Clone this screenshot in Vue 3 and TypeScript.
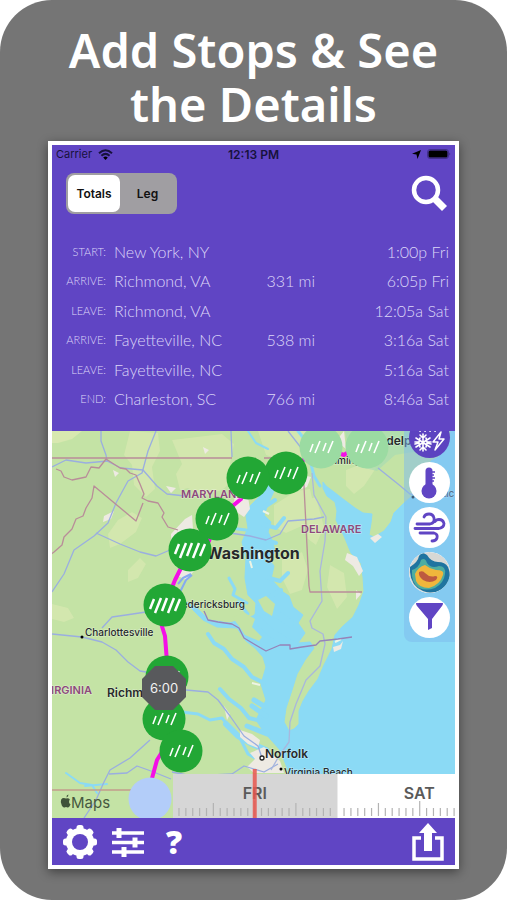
<script setup lang="ts">
import { ref } from 'vue'

interface Stop {
  label: string
  place: string
  miles: string
  time: string
}

interface Marker {
  x: number
  y: number
  heavy?: boolean
  faded?: boolean
}

const mode = ref<'totals' | 'leg'>('totals')

const stops: Stop[] = [
  { label: 'START:', place: 'New York, NY', miles: '', time: '1:00p Fri' },
  { label: 'ARRIVE:', place: 'Richmond, VA', miles: '331 mi', time: '6:05p Fri' },
  { label: 'LEAVE:', place: 'Richmond, VA', miles: '', time: '12:05a Sat' },
  { label: 'ARRIVE:', place: 'Fayetteville, NC', miles: '538 mi', time: '3:16a Sat' },
  { label: 'LEAVE:', place: 'Fayetteville, NC', miles: '', time: '5:16a Sat' },
  { label: 'END:', place: 'Charleston, SC', miles: '766 mi', time: '8:46a Sat' },
]

const markers: Marker[] = [
  { x: 367, y: 447, faded: true },
  { x: 321, y: 447, faded: true },
  { x: 286, y: 473 },
  { x: 248, y: 478 },
  { x: 217, y: 519 },
  { x: 190, y: 550, heavy: true },
  { x: 165, y: 605, heavy: true },
  { x: 167, y: 677 },
  { x: 164, y: 719 },
  { x: 181, y: 751 },
]

const lightRain = 'M-11 5l3-8M-6 6l5-12M2 4l3-8M7 6l5-12'
const heavyRain = 'M-15 4l4-10M-10 8l6-15M-3 6l5-13M3 8l6-15M10 6l5-12'

// One tick per hour; hour 0 is midnight between Friday and Saturday.
const ticks = Array.from({ length: 41 }, (_, i) => i - 23)
  .filter((h) => h !== 0)
  .map((h) => ({
    x: Math.round((164.7 + h * 6.9) * 10) / 10,
    top: h % 12 === 0 ? 33 : h % 6 === 0 ? 35 : 40,
  }))
</script>

<template>
  <main class="poster">
    <h1 class="headline">Add Stops &amp; See<br />the Details</h1>

    <section class="phone">
      <div class="status">
        <span class="carrier">
          Carrier
          <svg width="15" height="11" viewBox="0 0 15 11" aria-hidden="true">
            <path d="M1 4.200Q7.500-1.800 14 4.200" class="arc" />
            <path d="M3.400 6.700Q7.500 3 11.600 6.700" class="arc" />
            <path d="M5.200 8.400Q7.500 6.400 9.800 8.400L7.500 11z" />
          </svg>
        </span>
        <span class="clock">12:13 PM</span>
        <span class="indicators">
          <svg width="9" height="9" viewBox="0 0 9 9" aria-hidden="true"><path d="M9 0L5.500 9 4.500 4.500 0 3.700z" /></svg>
          <svg width="24" height="10" viewBox="0 0 24 10" aria-hidden="true">
            <rect x="0.500" y="0.500" width="21" height="9" rx="2.500" class="cell" />
            <rect x="1.500" y="1.500" width="19" height="7" rx="1.500" />
            <path d="M22.500 3.500q1.500 1.500 0 3z" opacity="0.500" />
          </svg>
        </span>
      </div>

      <div class="controls">
        <div class="segments">
          <button type="button" :class="{ active: mode === 'totals' }" @click="mode = 'totals'">Totals</button>
          <button type="button" :class="{ active: mode === 'leg' }" @click="mode = 'leg'">Leg</button>
        </div>
        <button type="button" class="bare" aria-label="Search">
          <svg width="36" height="36" viewBox="0 0 36 36" fill="none" stroke="#fff" aria-hidden="true">
            <circle cx="15" cy="15" r="12" stroke-width="4.500" />
            <path d="M23 23l10.500 10.500" stroke-width="7" />
          </svg>
        </button>
      </div>

      <table class="stops">
        <tbody>
          <tr v-for="(stop, i) in stops" :key="i">
            <th scope="row">{{ stop.label }}</th>
            <td>{{ stop.place }}</td>
            <td class="miles">{{ stop.miles }}</td>
            <td class="time">{{ stop.time }}</td>
          </tr>
        </tbody>
      </table>

      <div class="map">
        <svg class="terrain" viewBox="52 431 403 387" preserveAspectRatio="xMidYMid slice" role="img" aria-label="Route map">
          <rect x="52" y="431" width="403" height="387" fill="#c4e3a5" />
          <!-- lighter farmland -->
          <g fill="#d6e8b0" opacity="0.850">
            <path d="M130 431l28 2 2 18-8 16 3 22-9 8-12-12-2-20-8-10z" />
            <path d="M172 440l50-6 12 10-4 20 6 14-14 12-20 6-14-8-8 2-4-16 6-10z" />
            <path d="M118 520l14-8 10 6-6 14-16 12-10 4-2-14zM128 570l12-12 6 6-8 14-10 4z" />
            <path d="M274 505l22-14 14-2 4 18-10 18-18 8-12-6z" />
            <path d="M282 560l20-8 6 18-6 20-12 4-8-16zM306 500l10-3 8 30-8 18-8-6z" />
            <path d="M52 604l16 4 6 10-10 4-12-3zM258 431h60l-2 14-24 18-26-8zM330 565l14 8 3 24-10 12-10-22z" />
            <path d="M346 470l20-8 10 6-12 18-10 8-8-8z" />
          </g>
          <path d="M345 431h70l16 12-12 8-24 4-18 16-16-4-12-12z" fill="#a9dcb2" opacity="0.700" />
          <path d="M52 431h30l-10 8-14 4h-6z" fill="#d8e8b0" />

          <!-- Atlantic, Delaware Bay and Chesapeake -->
          <g fill="#8bdaf5" stroke="#8bdaf5" stroke-linejoin="round">
            <path d="M456 431h-5l-2 13-7 4-3 9-8 4-4 13-11 12-4 10-10 9-8 8-3 9-7 9-10 6-5-2 2-12 1-9-9-1-8-5-12-9-9-7-8-6-3-4 0 6 4 8 8 6 2 9-1 9 8 16 7 17 10 10 2 14 1 14-5 14-6 12-11 10-7 8-3 14-8 16-6 14-9 12-6 10-4 10v13l-5 5-5 2-5-9 2-14 6-18 5-16 8-14 9-12-4-6-12 1 7-10-7-10 5-8-10-8-4-11-6-4-12-13 3-13-6-8 7-6-2-10-5-10 3-10-7-7 5-13 5-11 8-12 12-16h-7l-14 14-12 18-11 11-4 10 2 12-6 14 4 16-1 20 3 17 8 8-1 12-10 4-16 4-20-3-12-12-10-6 4 6 12 12 14 7 20 1 9 13 9 7 8 9 3 10-5 17 5 16-10 20 8 12 16 18 6 15 3 8 7 14 5 5h169z" />
          </g>
          <!-- rivers and creeks -->
          <g fill="none" stroke="#8bdaf5" stroke-linecap="round" stroke-linejoin="round">
            <path d="M208 634l6 9 10 6 8 10 12 8 8 10 12 6" stroke-width="4" />
            <path d="M220 689l9 10 12 9 8 10 12 3" stroke-width="4" />
            <path d="M182 712l16 2 12 6 12-2 10 12 8 8 8 16 14 8" stroke-width="3" />
            <path d="M226 724l12 12 14 8 14 6" stroke-width="6" />
            <path d="M229 578l6 11-2 6 14 8M238 602l10 12" stroke-width="3" />
            <path d="M312 460l-2-14-12-15M320 486l-6-10-3-12M246 497l-12 8-6 16M246 530l-16-2-8 3" stroke-width="3" />
            <path d="M262 524l14 4 8-10M263 508l12-8M266 577l14 4 8-8M271 596l10-6M256 537l20 6" stroke-width="4" />
            <path d="M248 431l8 12 12 6M66 773l14 10 12 2 5 8M85 786l22-2" stroke-width="2" />
            <path d="M254 700l10 6M252 706l14 10M247 726l20 8" stroke-width="5" />
            <path d="M260 609l18 6 12 8M256 618l14 14 24 14" stroke-width="8" />
          </g>
          <path d="M232 617l13-4 10 6-3 8 10 10-3 4-14-6-6-9zM258 600l8-4 9 8-3 12-8-5z" fill="#c4e3a5" />
          <path d="M250 561l2 7M258 550l2 9M263 511l6 3M335 642l6-3M260 685l-8-2" stroke="#eef4e4" stroke-width="2" />

          <!-- urban and sandy areas -->
          <g fill="#eeeae3">
            <path d="M171 534l14-15 7-4 1 14 13 3-4 30-16 18-8-4 6-18-12-4z" />
            <path d="M236 493l12 4 2 12-6 8-12-8zM104 516l10-5-3 8-8 3z" />
            <path d="M347 553l10 4 6 14-4 5-6-10-8-6zM356 590l5 4-5 6zM340 645l3-4-2 8-7 3-1-5z" />
            <path d="M370 538l8-4 4 3-7 6zM428 475l6 6-8 14-8 4-3-6zM344 431l-8 10 10 8zM303 475l8 2-4 10-6 2z" />
            <path d="M224 706l6 8-3 6zM240 730l12 4 8 6-2 8-10-4-8-7zM250 753l14-6 16 14 4 12h-30l-7-6 8-8z" />
            <path d="M113 470l6 3-4 4zM203 447l6 3-4 4zM166 486l10 2-5 5z" />
          </g>

          <!-- roads -->
          <g fill="none" stroke="#9aaee0" stroke-width="1.300" stroke-linejoin="round">
            <path d="M156 431l-8 20-6 22-14 8-12 22-8 20-14 13-20 14-10 24-12 18" />
            <path d="M101 431v10l5 14 1 6 14 7 22 2 14 16 10 8 18 2" />
            <path d="M52 467l14-7 20 3 22-2M96 533l24 11 20 8 16 4 14-6" />
            <path d="M52 634l30 3 20 5 14 8 12 12 12 9 6 1M146 612l-20 3-14 2-10 11" />
            <path d="M186 690l22 2 10 8 12 16 14 20 14 10 4 12M150 740l-20 18-20 12-6 12-8 18-12 18" />
            <path d="M109 774l18-1 10-7 14 5 20 8M172 772l20 4 40-2 12-8 20 6 14-8" />
            <path d="M230 533l20 3 16 4 14-6 8-13 26-2 10-2" />
            <path d="M231 431l1 26M288 431l14 18 10 14M378 468l20 16 12 10 40 2" />
            <path d="M312 473l2 22 12 22-1 24-5 30 2 30-12 20 2 7 11 6 2 10-5 22-14 14-10 24-6 18-1 20-10 14-8 14" stroke="#a9b7dd" />
            <path d="M178 584l5-6 8-4M180 592l6-12 6-5" stroke="#86aaf0" stroke-width="2" />
          </g>

          <!-- state borders -->
          <g fill="none" stroke="#b98d99" stroke-width="1.300" stroke-linejoin="round">
            <path d="M52 458h180M264 458h26l6 6M303 476l1 10 5 100 1 6h52" />
            <path d="M56 469l5 2 3 6 8 3 14-3 5-10 8 1 7-9 14 9 6 1 4 4 6 2 4 9 4 10-2 4 6 3 10 2 6 10-2 4 6 10 10 3" />
            <path d="M143 503l-7 18-42-35-2 12-6 10-3 8-7 3-4 10-8 8-2 8-8 7-4 3" />
            <path d="M52 790h90" stroke="#c39d8d" />
            <path d="M204 611l4 9 10 2 14 2 7 4 5 10 10 6 12 7 14-6h10v4l12-2 14-2 4-4 18-2 14-2" stroke="#9683b8" />
          </g>

          <path
            class="route"
            d="M367 440l-23 15-23-8-35 26-38 5-7 21-24 20-8 22-19 9-15 30-10 25-5 15 5 16 2 26-3 42 17 32-10 11-9 5-5 8-6 22"
          />

          <!-- place names -->
          <g class="state">
            <text x="181" y="498">MARYLAND</text>
            <text x="301" y="533">DELAWARE</text>
            <text x="92" y="694" text-anchor="end">VIRGINIA</text>
          </g>
          <g class="town">
            <text x="245" y="608" text-anchor="end">Fredericksburg</text>
            <text x="85" y="636">Charlottesville</text>
            <text x="284" y="776">Virginia Beach</text>
            <text x="418" y="497">Atlantic City</text>
            <text x="322" y="464">Wilmington</text>
          </g>
          <g class="city">
            <text x="107" y="697">Richmond</text>
            <text x="265" y="758">Norfolk</text>
            <text x="358" y="445">Philadelphia</text>
          </g>
          <text x="206" y="559" class="capital">Washington</text>
          <circle cx="82" cy="637" r="1.500" />
          <circle cx="281" cy="769" r="1.500" />
          <circle cx="413" cy="497" r="1.500" />
          <circle cx="262" cy="758" r="2" fill="#fff" stroke="#222" stroke-width="1.300" />

          <g v-for="(m, i) in markers" :key="i" :transform="`translate(${m.x} ${m.y})`">
            <circle r="21.500" :fill="m.faded ? '#9bdba2' : '#22a735'" />
            <path
              :d="m.heavy ? heavyRain : lightRain"
              fill="none"
              stroke="#fff"
              :stroke-width="m.heavy ? 2.5 : 1.6"
            />
          </g>
          <path d="M155 666h18l13 13v18l-13 13h-18l-13-13v-18z" fill="#58595c" />
          <text x="164" y="693" text-anchor="middle" class="hold">6:00</text>
          <circle cx="150" cy="799" r="21.500" fill="#b3cdf9" />

          <path
            d="M69.500 797.500q-.3-2.300 1.900-3 .3 2.200-1.900 3zM72.800 799.300q-1.500-1.800-3.800-.8-3.300-1.200-4.800 1-1.200 2.600.6 6 1.400 2.600 2.800 2l1.400-.5 1.600.5q1.500.4 3-2.900-2.700-1.800-.8-5.300z"
            transform="translate(-3 0)"
            fill="#3f5239"
          />
          <text x="71" y="808" class="brand">Maps</text>
        </svg>

        <div class="layers">
          <button type="button" class="layer filled" aria-label="Precipitation">
            <svg viewBox="0 0 41 41" fill="none" stroke="#fff" stroke-linecap="round" aria-hidden="true">
              <path d="M11 14l2-4M16 14l2-4M21 14l2-4M26 14l2-4" stroke-width="1.800" />
              <path d="M14 17v17M7 21l14 9M21 21l-14 9M11 18l3 3 3-3M11 33l3-3 3 3M6 25h4l1-4M22 25h-4l-1-4M6 27l4-1 1 4M22 27l-4-1-1 4" stroke-width="1.600" />
              <path d="M32 15l-8 10h5l-3 8 9-11h-5z" stroke-width="1.500" stroke-linejoin="round" />
            </svg>
          </button>
          <button type="button" class="layer" aria-label="Temperature">
            <svg viewBox="0 0 41 41" aria-hidden="true">
              <circle cx="20" cy="29" r="7.500" />
              <path d="M16.500 27V9a3.500 3.500 0 0 1 7 0v18z" />
              <path d="M23 10h3M23 13h2M23 16h3M23 19h2" stroke="#6045c4" stroke-width="1.500" />
            </svg>
          </button>
          <button type="button" class="layer" aria-label="Wind">
            <svg viewBox="0 0 41 41" aria-hidden="true">
              <path
                d="M8 17h13q5-1 4-6-1-4-5-4-4 0-5 3M6 21.500h24q5-1 5-5-1-4-5-4-3 0-4 2M11 26h14q4 1 3 5-1 3-5 3"
                fill="none"
                stroke="#6045c4"
                stroke-width="2.800"
                stroke-linecap="round"
              />
            </svg>
          </button>
          <button type="button" class="layer" aria-label="Radar">
            <svg viewBox="0 0 41 41" aria-hidden="true">
              <circle cx="20.500" cy="20.500" r="20.500" fill="#d7d8d5" />
              <path d="M1 15q8-5 9-11 3-5 8-1 4 7 11 7 7 0 10 5 6 14-6 22-9 6-19 2-12-5-13-19z" fill="#1f74a0" />
              <path d="M3 18q7-2 9-10 4-3 6 3 4 6 12 3 7 0 6 8-1 9-10 14-8 3-16 0Q2 31 3 18z" fill="#4eada0" />
              <path d="M6 22q3-7 10-9 5 4 11 5 9 0 7 5-3 10-14 13-10 0-13-7z" fill="#f0b63c" />
              <path d="M10 20q4-2 6 1 5 5 10 3 4 0 1 4-6 4-13 0-5-4-4-8z" fill="#bd5a40" />
            </svg>
          </button>
          <button type="button" class="layer" aria-label="Filter">
            <svg viewBox="0 0 41 41" aria-hidden="true"><path d="M7 6h27q0 2-1 3L23 22v9l-4 2V22L8 9q-1-1-1-3z" /></svg>
          </button>
        </div>

        <svg class="timeline" viewBox="0 0 283 50" preserveAspectRatio="none" role="img" aria-label="Timeline">
          <rect y="6" width="283" height="44" fill="#fff" />
          <rect y="6" width="165" height="44" fill="#d6d6d6" />
          <path v-for="t in ticks" :key="t.x" :d="`M${t.x} ${t.top}V48`" stroke="#b3b3b3" stroke-width="1.200" />
          <text x="82" y="31" text-anchor="middle">FRI</text>
          <text x="247" y="31" text-anchor="middle">SAT</text>
          <rect x="80" y="1" width="4" height="49" fill="#e8574f" opacity="0.850" />
        </svg>
      </div>

      <nav class="toolbar" aria-label="Tools">
        <button type="button" class="bare" aria-label="Settings">
          <svg width="36" height="36" viewBox="0 0 36 36" aria-hidden="true">
            <g fill="#fff">
              <rect v-for="a in [0, 45, 90, 135]" :key="a" x="14.500" y="1" width="7" height="34" rx="2.500" :transform="`rotate(${a} 18 18)`" />
              <circle cx="18" cy="18" r="14" />
            </g>
            <circle cx="18" cy="18" r="8" fill="#6045c4" />
          </svg>
        </button>
        <button type="button" class="bare" aria-label="Adjust">
          <svg width="34" height="32" viewBox="0 0 34 32" fill="none" stroke="#fff" stroke-width="5" aria-hidden="true">
            <path d="M1 7h32M1 16.500h32M1 26h32" stroke-width="3.500" />
            <path d="M8 2v10M24 11.500v10M13 21v10" />
          </svg>
        </button>
        <button type="button" class="bare help" aria-label="Help">?</button>
        <button type="button" class="bare share" aria-label="Share">
          <svg width="34" height="40" viewBox="0 0 34 40" aria-hidden="true">
            <path d="M10 16H3v21h28V16h-7" fill="none" stroke="#fff" stroke-width="3.500" />
            <path d="M17 1l9 10h-5v18h-8V11H8z" fill="#fff" />
          </svg>
        </button>
      </nav>
    </section>
  </main>
</template>

<style>
body {
  margin: 0;
  background: #fff;
}
</style>

<style scoped>
.poster {
  box-sizing: border-box;
  min-height: 100vh;
  padding: 23px 48px 31px;
  border-radius: 52px;
  background: #757575;
  font-family: Inter, "Liberation Sans", sans-serif;
}

.headline {
  margin: 0 -20px 10px;
  color: #fff;
  font: 600 47px/54px "Noto Sans", "Open Sans", sans-serif;
  text-align: center;
}

.phone {
  border: 4px solid #fff;
  background: #6045c4;
  box-shadow: 0 3px 10px rgb(0 0 0 / 45%);
}

button {
  padding: 0;
  border: 0;
  background: none;
  color: inherit;
  font: inherit;
  cursor: pointer;
}

svg {
  display: block;
}

.status {
  display: grid;
  grid-template-columns: 1fr auto 1fr;
  align-items: center;
  height: 18px;
  padding: 0 4px;
  color: #17123c;
  font-size: 11px;
}

.carrier,
.indicators {
  display: flex;
  align-items: center;
  gap: 6px;
}

.indicators {
  justify-content: flex-end;
}

.clock {
  font-size: 12px;
  font-weight: 600;
}

.arc {
  fill: none;
  stroke: #17123c;
  stroke-width: 2;
}

.cell {
  fill: none;
  stroke: #17123c;
  opacity: 0.4;
}

.controls {
  display: flex;
  justify-content: space-between;
  align-items: center;
  height: 60px;
  padding: 0 8px 0 14px;
}

.segments {
  display: grid;
  grid-template-columns: 52px 1fr;
  box-sizing: border-box;
  width: 111px;
  height: 41px;
  padding: 2px;
  border-radius: 8px;
  background: #a09ea2;
  color: #111;
  font-size: 12px;
  font-weight: 600;
}

.segments button {
  border-radius: 7px;
}

.segments .active {
  background: #fff;
}

.stops {
  width: 100%;
  height: 177px;
  margin: 14px 0 17px;
  border-collapse: collapse;
  color: #ddd7f8;
  font: 300 16px/20px Lato, sans-serif;
  white-space: nowrap;
}

.stops th,
.stops td {
  padding: 0;
  text-align: left;
}

.stops th {
  width: 54px;
  padding-right: 8px;
  font-size: 11px;
  font-weight: 300;
  text-align: right;
}

.stops .miles {
  padding-right: 8px;
  text-align: right;
}

.stops .time {
  width: 126px;
  padding-right: 6px;
  text-align: right;
}

.map {
  position: relative;
  overflow: hidden;
}

.terrain {
  width: 100%;
}

.terrain text {
  fill: #26292b;
  paint-order: stroke;
  stroke: rgb(255 255 255 / 45%);
  stroke-width: 1px;
}

.terrain .state text {
  fill: #8d4a7c;
  font-size: 11px;
  font-weight: 600;
}

.town {
  font-size: 10px;
  font-weight: 500;
}

.city {
  font-size: 12px;
  font-weight: 600;
}

.capital {
  font-size: 16px;
  font-weight: 700;
}

.terrain .hold {
  fill: #f2f2f2;
  stroke: none;
  font-size: 13px;
}

.terrain .brand {
  fill: #46583f;
  stroke: none;
  font-size: 15px;
}

.route {
  fill: none;
  stroke: #f40fe6;
  stroke-width: 4;
  stroke-linejoin: round;
}

.layers {
  position: absolute;
  top: -18px;
  right: 0;
  display: flex;
  flex-direction: column;
  gap: 4px;
  padding: 4px 5px;
  border-radius: 0 0 0 8px;
  background: rgb(125 186 238 / 50%);
}

.layer {
  width: 41px;
  height: 41px;
  overflow: hidden;
  border-radius: 50%;
  background: #fff;
  fill: #6045c4;
}

.filled {
  background: #5c43c0;
}

.timeline {
  position: absolute;
  right: 0;
  bottom: 0;
  width: 70%;
  height: 50px;
}

.timeline text {
  fill: #5a5a5a;
  font-size: 16px;
  font-weight: 600;
}

.toolbar {
  display: flex;
  align-items: center;
  gap: 13px;
  height: 47px;
  padding: 0 10px;
  box-sizing: border-box;
}

.bare {
  color: #fff;
}

.help {
  width: 32px;
  height: 40px;
  font: 800 32px/36px "Open Sans", sans-serif;
}

.share {
  margin-left: auto;
}
</style>
